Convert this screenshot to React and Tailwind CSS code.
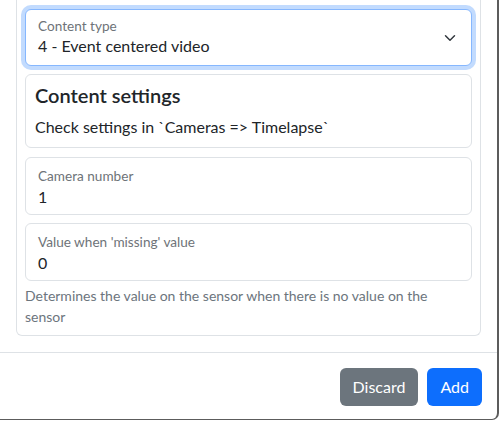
const FloatingField = ({ label, value }) => (
    <div className="border border-[#dee2e6] rounded-md bg-white pl-3 pr-3 pt-[10px] pb-[5px]">
        <div className="text-[13.6px] leading-[17px] text-[#6e7378]">{label}</div>
        <div className="text-base leading-6 text-[#212529]">{value}</div>
    </div>
);

export default function App() {
    return (
        <div className="w-[500px] h-[421px] bg-white text-[#212529] font-['Segoe_UI','Lato',sans-serif]">
            <div className="w-[499px] h-[420px] border-r-2 border-b border-[#5c5c5c] rounded-br-[7px] flex flex-col overflow-hidden">
                <div className="h-[352px] px-4 shrink-0">
                    <div className="border border-t-0 border-[#dee2e6] rounded-b-md px-2 pt-[9px] pb-2 flex flex-col gap-2">
                        <div className="relative border border-[#86b7fe] rounded-md ring-4 ring-[#0d6efd]/25 bg-white pl-3 pr-10 pt-2 pb-[7px]">
                            <div className="text-[13.6px] leading-4 text-[#6e7378]">Content type</div>
                            <div className="text-base leading-6">4 - Event centered video</div>
                            <svg
                                className="absolute right-[15px] top-[22px]"
                                width="12"
                                height="12"
                                viewBox="0 0 16 16"
                                fill="none"
                                stroke="#343a40"
                                strokeWidth="2"
                                strokeLinecap="round"
                                strokeLinejoin="round"
                            >
                                <path d="m2 5 6 6 6-6" />
                            </svg>
                        </div>

                        <div className="border border-[#dee2e6] rounded-md px-[9px] py-2">
                            <h5 className="text-xl leading-6 font-semibold mb-2">Content settings</h5>
                            <p className="text-base leading-6">Check settings in `Cameras =&gt; Timelapse`</p>
                        </div>

                        <div className="flex flex-col gap-[8px] mt-px">
                            <FloatingField label="Camera number" value="1" />
                            <div>
                                <FloatingField label="Value when 'missing' value" value="0" />
                                <div className="mt-1 max-w-[430px] text-sm leading-[21px] text-[#6c757d]">
                                    Determines the value on the sensor when there is no value on the sensor
                                </div>
                            </div>
                        </div>
                    </div>
                </div>

                <div className="border-t border-[#dee2e6] flex justify-end gap-[9px] pt-[15px] pr-[15px]">
                    <button className="h-[38px] px-[13px] rounded-md bg-[#6c757d] text-white text-base">Discard</button>
                    <button className="h-[38px] px-[13px] rounded-md bg-[#0d6efd] text-white text-base">Add</button>
                </div>
            </div>
        </div>
    );
}
